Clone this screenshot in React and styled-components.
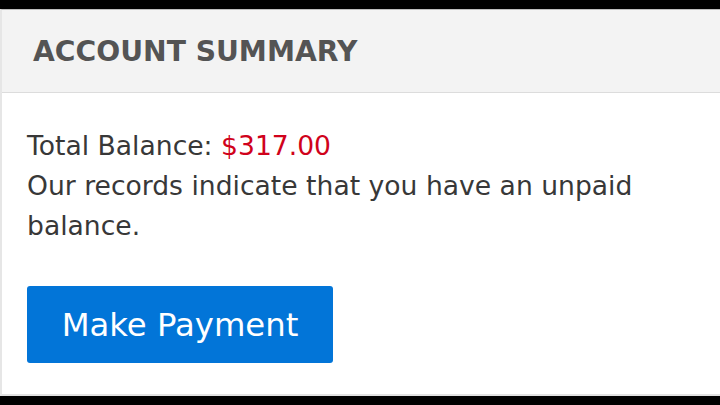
import React from "react";
import styled, { createGlobalStyle } from "styled-components";

const Global = createGlobalStyle`
  html, body { margin: 0; padding: 0; background: #000; }
  body { width: 720px; height: 405px; overflow: hidden; font-family: "DejaVu Sans", Verdana, sans-serif; }
`;

const Screen = styled.div`
  padding-top: 9px;
  height: 405px;
  box-sizing: border-box;
`;

const Panel = styled.section`
  background: #fff;
  border-top: 1px solid #bdbdbd;
  border-left: 2px solid #e6e6e6;
  border-bottom: 2px solid #e2e2e2;
  display: flex;
  flex-direction: column;
`;

const Header = styled.header`
  height: 82px;
  background: #f3f3f3;
  border-bottom: 1px solid #dcdcdc;
  display: flex;
  align-items: center;
  padding-left: 31px;
`;

const Title = styled.h2`
  margin: 0;
  font-size: 28.2px;
  font-weight: bold;
  color: #545454;
`;

const Body = styled.div`
  padding: 33px 25px 31px 25px;
  display: flex;
  flex-direction: column;
  align-items: flex-start;
  gap: 40px;
`;

const Text = styled.p`
  margin: 0;
  font-size: 26.6px;
  line-height: 40px;
  color: #383838;
`;

const Amount = styled.span`
  color: #d0021b;
`;

const Button = styled.button`
  width: 306px;
  height: 77px;
  border: none;
  border-radius: 3px;
  background: #0275d8;
  color: #fff;
  font-family: inherit;
  font-size: 32.3px;
  cursor: pointer;
  padding: 0;
`;

export default function App() {
  return (
    <>
      <Global />
      <Screen>
        <Panel>
          <Header>
            <Title>ACCOUNT SUMMARY</Title>
          </Header>
          <Body>
            <Text>
              Total Balance: <Amount>$317.00</Amount>
              <br />
              Our records indicate that you have an unpaid balance.
            </Text>
            <Button>Make Payment</Button>
          </Body>
        </Panel>
      </Screen>
    </>
  );
}
